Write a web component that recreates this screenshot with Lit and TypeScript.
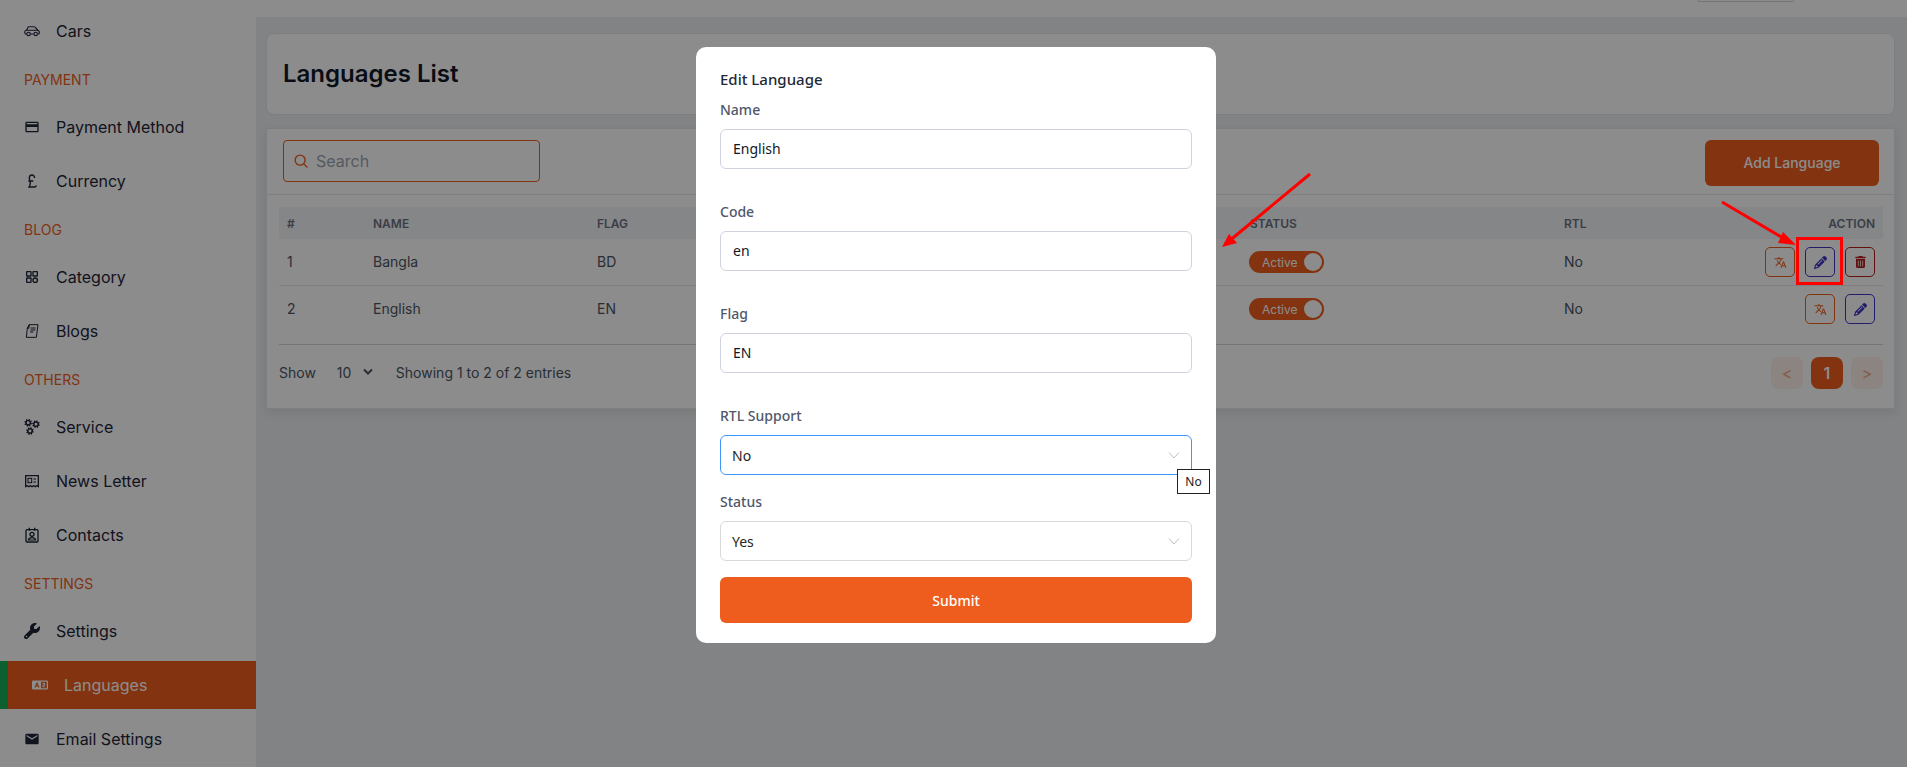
import { LitElement, css, html, svg } from "lit";
import { customElement } from "lit/decorators.js";

// one toothed gear as a path, the hole is cut by evenodd
const gear = (cx: number, cy: number, r: number) => {
  const teeth = 8;
  const pts: string[] = [];
  for (let i = 0; i < teeth * 4; i++) {
    const a = (i / (teeth * 4)) * Math.PI * 2 + 0.2;
    const rad = i % 4 < 2 ? r : r * 0.72;
    pts.push(`${(cx + Math.cos(a) * rad).toFixed(2)} ${(cy + Math.sin(a) * rad).toFixed(2)}`);
  }
  const h = r * 0.36;
  const hole = `M${cx - h} ${cy}a${h} ${h} 0 1 0 ${h * 2} 0a${h} ${h} 0 1 0 ${-h * 2} 0z`;
  return svg`<path fill="currentColor" fill-rule="evenodd" d=${"M" + pts.join("L") + "z" + hole}></path>`;
};

const icons: Record<string, unknown> = {
  car: svg`<svg class="ico" viewBox="0 -3 16 16" fill="none" stroke="currentColor" stroke-width="1.100" stroke-linejoin="round"><path d="M2.600 4.300 3.900 1.500Q4.200.700 5 .700H9.700Q10.500.700 11 1.200L13.700 4"/><path d="M2.800 8H1.700Q.800 8 .800 7.100V5.800Q.800 4.300 2.500 4.300H13Q15.300 4.500 15.300 6.300V7.200Q15.300 8 14.500 8H13.600M6.300 8H9.800"/><circle cx="4.500" cy="8" r="1.700"/><circle cx="11.700" cy="8" r="1.700"/></svg>`,
  card: svg`<svg class="ico" viewBox="0 0 24 24" fill="currentColor"><path d="M20 4H4c-1.110 0-1.990.890-1.990 2L2 18c0 1.110.890 2 2 2h16c1.110 0 2-.890 2-2V6c0-1.110-.890-2-2-2zm0 14H4v-6h16v6zm0-10H4V6h16v2z"/></svg>`,
  pound: svg`<svg class="ico" viewBox="0 0 24 24" fill="none" stroke="currentColor" stroke-width="2"><path d="M16 7.500C15.600 5 14 3 12 3 9.500 3 8 5 8 7.500c0 3 1.500 5 1.500 8 0 2.500-1 4-2 5.500h8c1.700 0 2.700-1 3-2.500M6.500 12H14"/></svg>`,
  grid: svg`<svg class="ico" viewBox="0 0 24 24" fill="none" stroke="currentColor" stroke-width="2"><rect x="4" y="4" width="6.500" height="6.500" rx=".5"/><rect x="13.500" y="4" width="6.500" height="6.500" rx=".5"/><rect x="4" y="13.500" width="6.500" height="6.500" rx=".5"/><circle cx="16.800" cy="16.800" r="3.300"/></svg>`,
  blog: svg`<svg class="ico" viewBox="0 0 24 24" fill="none" stroke="currentColor" stroke-width="1.500" stroke-linejoin="round"><path d="M8 2.500h13l-2.500 19H3.500L5 8z"/><path d="M8 2.500 5 8h2.300zM10 7.500h7.500M9.500 10.500h7.500M9 13.500h5"/></svg>`,
  gears: svg`<svg class="ico" viewBox="0 0 16 16">${gear(4.2, 3.8, 4)}${gear(12, 5.2, 4)}${gear(6, 12, 4)}</svg>`,
  news: svg`<svg class="ico" viewBox="0 0 24 24" fill="none" stroke="currentColor" stroke-width="2"><path d="M2.500 4h19v16.500l-2.400-1.400-2.300 1.400-2.400-1.400-2.400 1.400-2.400-1.400-2.300 1.400-2.400-1.400-2.400 1.400z"/><rect x="6" y="8" width="5.500" height="6.500" stroke-width="1.600"/><path d="M14 9h4M14 13.500h4" stroke-width="1.800"/></svg>`,
  contact: svg`<svg class="ico" viewBox="0 0 24 24" fill="none" stroke="currentColor" stroke-width="2"><rect x="3" y="4" width="18" height="18.500" rx="1.500"/><path d="M8 1v4.500M16 1v4.500"/><circle cx="12" cy="11" r="3"/><path d="M6.500 19.500c.7-2.500 3-3.500 5.500-3.500s4.800 1 5.500 3.500z" stroke-width="1.800"/></svg>`,
  wrench: svg`<svg class="ico" viewBox="0 0 512 512" fill="currentColor"><path d="M352 320c88.400 0 160-71.600 160-160c0-15.300-2.200-30.100-6.200-44.200c-3.100-10.800-16.400-13.200-24.300-5.300l-76.800 76.800c-3 3-7.100 4.700-11.300 4.700H336c-8.800 0-16-7.200-16-16V118.600c0-4.200 1.700-8.300 4.700-11.300l76.800-76.800c7.900-7.900 5.400-21.200-5.300-24.300C382.100 2.200 367.300 0 352 0C263.600 0 192 71.600 192 160c0 19.100 3.400 37.500 9.500 54.500L19.900 396.100C7.200 408.800 0 426.100 0 444.100C0 481.600 30.400 512 67.900 512c18 0 35.300-7.200 48-19.900L297.500 310.500c17 6.200 35.400 9.500 54.500 9.500zM80 408a24 24 0 1 1 0 48 24 24 0 1 1 0-48z"/></svg>`,
  lang: svg`<svg class="ico" viewBox="0 0 16 16"><path fill="currentColor" fill-rule="evenodd" d="M1.200 3.500H14.800Q16 3.500 16 4.700V11.300Q16 12.500 14.800 12.500H1.200Q0 12.500 0 11.300V4.700Q0 3.500 1.200 3.500zM4.500 5.500 2.500 10.500H3.800L4.100 9.600H5.900L6.200 10.500H7.500L5.500 5.500zM5 7 5.500 8.500H4.500zM9 4.800V11.200H14.700V4.800zM10.500 6H13V8.600H11.500V9.400H13V10.200H10.500V7.800H12V6.900H10.500z"/></svg>`,
  mail: svg`<svg class="ico" viewBox="0 0 24 24" fill="currentColor"><path d="M20 4H4c-1.100 0-1.990.900-1.990 2L2 18c0 1.100.900 2 2 2h16c1.100 0 2-.900 2-2V6c0-1.100-.900-2-2-2zm0 4l-8 5-8-5V6l8 5 8-5v2z"/></svg>`,
};

const translateIcon = svg`<svg class="act" viewBox="0 0 24 24" fill="currentColor"><path d="M12.870 15.070l-2.540-2.510.030-.030c1.740-1.940 2.980-4.170 3.710-6.530H17V4h-7V2H8v2H1v1.990h11.170C11.500 7.920 10.440 9.750 9 11.350 8.070 10.320 7.300 9.190 6.690 8h-2c.730 1.630 1.730 3.170 2.980 4.560l-5.090 5.020L4 19l5-5 3.110 3.110.760-2.040zM18.500 10h-2L12 22h2l1.120-3h4.750L21 22h2l-4.500-12zm-2.620 7l1.620-4.330L19.120 17h-3.240z"/></svg>`;
const pencilIcon = svg`<svg class="act" viewBox="0 0 512 512" fill="currentColor"><path d="M410.300 231l11.300-11.300-33.900-33.900-62.100-62.100L291.700 89.800l-11.300 11.300-22.600 22.600L58.600 322.900c-10.400 10.400-18 23.300-22.200 37.400L1 480.700c-2.500 8.400-.2 17.500 6.100 23.700s15.300 8.500 23.700 6.100l120.300-35.400c14.100-4.200 27-11.800 37.400-22.200L387.700 253.700 410.300 231zM160 399.400l-9.100 22.700c-4 3.100-8.500 5.400-13.300 6.900L59.400 452l23-78.100c1.400-4.900 3.800-9.400 6.900-13.300l22.700-9.100v32c0 8.800 7.200 16 16 16h32zM362.700 18.700L348.300 33.200 325.700 55.800 314.300 67.100l33.900 33.900 62.100 62.100 33.900 33.900 11.300-11.300 22.600-22.600 14.500-14.500c25-25 25-65.500 0-90.500L453.300 18.700c-25-25-65.500-25-90.500 0zm-47.400 168l-144 144c-6.200 6.200-16.400 6.200-22.600 0s-6.200-16.400 0-22.600l144-144c6.200-6.200 16.400-6.200 22.600 0s6.200 16.400 0 22.600z"/></svg>`;
const trashIcon = svg`<svg class="act" viewBox="0 0 448 512" fill="currentColor"><path d="M135.200 17.700C140.600 6.800 151.700 0 163.800 0H284.200c12.100 0 23.200 6.800 28.600 17.700L320 32h96c17.700 0 32 14.300 32 32s-14.300 32-32 32H32C14.300 96 0 81.700 0 64S14.300 32 32 32h96l7.200-14.300zM32 128H416V448c0 35.300-28.700 64-64 64H96c-35.300 0-64-28.700-64-64V128zm96 64c-8.800 0-16 7.200-16 16V432c0 8.800 7.200 16 16 16s16-7.200 16-16V208c0-8.800-7.200-16-16-16zm96 0c-8.800 0-16 7.200-16 16V432c0 8.800 7.200 16 16 16s16-7.200 16-16V208c0-8.800-7.200-16-16-16zm96 0c-8.800 0-16 7.200-16 16V432c0 8.800 7.200 16 16 16s16-7.200 16-16V208c0-8.800-7.200-16-16-16z"/></svg>`;

type NavItem = { label: string; icon?: string; active?: boolean; section?: boolean };

const nav: NavItem[] = [
  { label: "Cars", icon: "car" },
  { label: "PAYMENT", section: true },
  { label: "Payment Method", icon: "card" },
  { label: "Currency", icon: "pound" },
  { label: "BLOG", section: true },
  { label: "Category", icon: "grid" },
  { label: "Blogs", icon: "blog" },
  { label: "OTHERS", section: true },
  { label: "Service", icon: "gears" },
  { label: "News Letter", icon: "news" },
  { label: "Contacts", icon: "contact" },
  { label: "SETTINGS", section: true },
  { label: "Settings", icon: "wrench" },
  { label: "Languages", icon: "lang", active: true },
  { label: "Email Settings", icon: "mail" },
];

const rows = [
  { id: 1, name: "Bangla", flag: "BD", code: "bn", canDelete: true },
  { id: 2, name: "English", flag: "EN", code: "en", canDelete: false },
];

@customElement("app-root")
export class AppRoot extends LitElement {
  static styles = css`
    :host {
      display: block;
      height: 767px;
      overflow: hidden;
      position: relative;
      font-family: Inter, "Liberation Sans", sans-serif;
      color: #1f2937;
    }
    * { box-sizing: border-box; }
    .page { display: flex; height: 767px; background: #eceef0; }

    .sidebar {
      width: 256px;
      flex: none;
      background: #fff;
      padding-top: 7px;
      display: flex;
      flex-direction: column;
      gap: 6px;
    }
    .section {
      height: 36px;
      padding-left: 24px;
      display: flex;
      align-items: center;
      font-size: 14px;
      color: #ee5d1d;
    }
    .item {
      height: 48px;
      flex: none;
      padding-left: 24px;
      display: flex;
      align-items: center;
      gap: 16px;
      font-size: 16px;
      color: #1e2538;
    }
    .item.active {
      background: #ee5d1d;
      color: #fff;
      border-left: 8px solid #16ad55;
    }
    .ico { width: 16px; height: 16px; flex: none; }

    .main { flex: 1; min-width: 0; display: flex; flex-direction: column; }
    .topbar { height: 17px; background: #fff; display: flex; justify-content: flex-end; padding-right: 113px; flex: none; }
    .top-btn { width: 96px; height: 2px; border: 1px solid #d1d5db; border-top: 0; border-radius: 0 0 6px 6px; }
    .content { padding: 16px 12px 0 10px; display: flex; flex-direction: column; gap: 13px; }
    .title-card {
      height: 82px;
      background: #fff;
      border: 1px solid #e5e7eb;
      border-radius: 8px;
      padding-left: 16px;
      display: flex;
      align-items: center;
    }
    h1 { margin: 0 0 2px; font-size: 24px; font-weight: 600; color: #111827; }
    .list-card {
      height: 281px;
      background: #fff;
      border: 1px solid #e5e7eb;
      box-shadow: 0 4px 8px rgba(0, 0, 0, 0.08);
      border-radius: 2px;
    }
    .toolbar {
      height: 66px;
      padding: 11px 15px 0 16px;
      display: flex;
      justify-content: space-between;
      align-items: flex-start;
      border-bottom: 1px solid #e5e7eb;
    }
    .search {
      width: 257px;
      height: 42px;
      border: 1px solid #ee5d1d;
      border-radius: 4px;
      display: flex;
      align-items: center;
      gap: 8px;
      padding-left: 10px;
      font-size: 16px;
      color: #9ca3af;
    }
    .search svg { width: 14px; height: 14px; color: #ee5d1d; }
    .add {
      width: 174px;
      height: 46px;
      border: 0;
      border-radius: 6px;
      background: #ee5d1d;
      color: #fff;
      padding-bottom: 2px;
      font: 500 14px Inter, sans-serif;
    }
    .table-wrap { padding: 12px 11px 0 12px; }
    table { width: 1604px; border-collapse: collapse; table-layout: fixed; font-size: 14px; color: #4b5563; }
    col.c-id { width: 86px; }
    col.c-name { width: 224px; }
    col.c-flag { width: 327px; }
    col.c-code { width: 326px; }
    col.c-status { width: 314px; }
    col.c-rtl { width: 140px; }
    col.c-action { width: 187px; }
    th {
      height: 32px;
      padding: 0 8px;
      background: #f3f4f6;
      text-align: left;
      font-size: 12px;
      font-weight: 600;
      color: #6b7280;
      text-transform: uppercase;
    }
    th.right { text-align: right; }
    td { padding: 8px; height: 46px; }
    td .t { margin-bottom: 2px; }
    tr.sep td { border-bottom: 1px solid #e5e7eb; }
    .actions { display: flex; justify-content: flex-end; gap: 10px; }
    .act-btn {
      width: 30px;
      height: 30px;
      background: #fff;
      border: 1px solid currentColor;
      border-radius: 5px;
      padding: 0;
      display: flex;
      align-items: center;
      justify-content: center;
    }
    .act { width: 13px; height: 13px; }
    .red .act { width: 11px; height: 12px; }
    .orange { color: #ee5d1d; }
    .blue { color: #3f36c4; }
    .red { color: #b91c1c; }
    .toggle {
      width: 75px;
      height: 22px;
      margin-left: -1px;
      border-radius: 11px;
      background: #ee5d1d;
      color: #fff;
      display: flex;
      align-items: center;
      justify-content: space-between;
      padding: 0 2px 0 13px;
      font-size: 12px;
    }
    .knob { width: 18px; height: 18px; border-radius: 50%; background: #fff; }
    .foot {
      margin: 12px 11px 0 12px;
      border-top: 1px solid #d1d5db;
      padding-top: 12px;
      display: flex;
      align-items: center;
      justify-content: space-between;
      font-size: 14px;
      color: #4b5563;
    }
    .foot-left { display: flex; align-items: center; padding-bottom: 2px; }
    .size { margin-left: 21px; display: flex; align-items: center; gap: 12px; width: 59px; font-size: 14px; }
    .size svg { width: 10px; height: 8px; }
    .pager { display: flex; gap: 8px; }
    .pg {
      width: 32px;
      height: 32px;
      border-radius: 8px;
      display: flex;
      align-items: center;
      justify-content: center;
      background: #fdf0e9;
      color: #f3a783;
      font-size: 16px;
    }
    .pg.on { background: #ee5d1d; color: #fff; font-weight: 600; }

    .mask {
      position: absolute;
      inset: 0;
      background: rgba(0, 0, 0, 0.45);
    }
    .modal {
      position: absolute;
      left: 696px;
      top: 47px;
      width: 520px;
      height: 596px;
      background: #fff;
      border-radius: 10px;
      padding: 22px 24px 20px;
      font-family: "Noto Sans", "Open Sans", sans-serif;
      font-size: 14px;
    }
    .modal h2 { margin: 0 0 11px; font-size: 15px; line-height: 20px; font-weight: 500; color: #1f2937; }
    .field { margin-bottom: 33px; }
    .field.tight { margin-bottom: 17px; }
    .field.last { margin-bottom: 16px; }
    .field label { display: block; line-height: 20px; margin-bottom: 9px; color: #4f576b; font-weight: 500; font-size: 14px; }
    .field input {
      display: block;
      width: 100%;
      height: 40px;
      border: 1px solid #cfd3e0;
      border-radius: 6px;
      padding: 0 12px 2px;
      font: 14px "Noto Sans", sans-serif;
      color: #111827;
      outline: none;
    }
    .select {
      position: relative;
      height: 40px;
      border: 1px solid #d9d9d9;
      border-radius: 6px;
      padding: 0 11px;
      display: flex;
      align-items: center;
      justify-content: space-between;
      color: #262626;
    }
    .select.focus { border-color: #4096ff; }
    .select svg { width: 12px; height: 12px; color: #bfbfbf; }
    .tip {
      position: absolute;
      left: 456px;
      top: 33px;
      width: 33px;
      height: 25px;
      background: #fff;
      border: 1px solid #222;
      font-size: 12px;
      display: flex;
      align-items: center;
      justify-content: center;
      color: #222;
    }
    .submit {
      display: block;
      width: 100%;
      height: 46px;
      border: 0;
      border-radius: 6px;
      background: #ee5d1d;
      color: #fff;
      font: 500 14px "Noto Sans", sans-serif;
    }
    .notes { position: absolute; inset: 0; width: 1907px; height: 767px; pointer-events: none; }
  `;

  private chevron() {
    return svg`<svg viewBox="0 0 12 12" fill="none" stroke="currentColor" stroke-width="1"><path d="M1 3.500 6 9l5-5.500"/></svg>`;
  }

  private navItem(n: NavItem) {
    if (n.section) return html`<div class="section">${n.label}</div>`;
    return html`<div class="item ${n.active ? "active" : ""}">${icons[n.icon!]}<span>${n.label}</span></div>`;
  }

  private table() {
    return html`
      <table>
        <colgroup>
          <col class="c-id" /><col class="c-name" /><col class="c-flag" /><col class="c-code" />
          <col class="c-status" /><col class="c-rtl" /><col class="c-action" />
        </colgroup>
        <thead>
          <tr>
            <th>#</th><th>Name</th><th>Flag</th><th>Code</th><th>Status</th><th>RTL</th>
            <th class="right">Action</th>
          </tr>
        </thead>
        <tbody>
          ${rows.map(
            (r, i) => html`
              <tr class=${i === 0 ? "sep" : ""}>
                <td><div class="t">${r.id}</div></td>
                <td><div class="t">${r.name}</div></td>
                <td><div class="t">${r.flag}</div></td>
                <td><div class="t">${r.code}</div></td>
                <td><div class="toggle"><span>Active</span><span class="knob"></span></div></td>
                <td><div class="t">No</div></td>
                <td>
                  <div class="actions">
                    <button class="act-btn orange">${translateIcon}</button>
                    <button class="act-btn blue">${pencilIcon}</button>
                    ${r.canDelete ? html`<button class="act-btn red">${trashIcon}</button>` : ""}
                  </div>
                </td>
              </tr>
            `
          )}
        </tbody>
      </table>
    `;
  }

  render() {
    return html`
      <div class="page">
        <aside class="sidebar">${nav.map((n) => this.navItem(n))}</aside>
        <div class="main">
          <div class="topbar"><div class="top-btn"></div></div>
          <div class="content">
            <div class="title-card"><h1>Languages List</h1></div>
            <div class="list-card">
              <div class="toolbar">
                <div class="search">
                  <svg viewBox="0 0 24 24" fill="none" stroke="currentColor" stroke-width="2.400"><circle cx="10.500" cy="10.500" r="8.500"/><path d="m23 23-6.500-6.500"/></svg>
                  <span>Search</span>
                </div>
                <button class="add">Add Language</button>
              </div>
              <div class="table-wrap">${this.table()}</div>
              <div class="foot">
                <div class="foot-left">
                  <span>Show</span>
                  <span class="size"><span>10</span><svg viewBox="0 0 10 8" fill="none" stroke="currentColor" stroke-width="2"><path d="M1 1.500 5 5.500l4-4"/></svg></span>
                  <span>Showing 1 to 2 of 2 entries</span>
                </div>
                <div class="pager">
                  <span class="pg">&lt;</span><span class="pg on">1</span><span class="pg">&gt;</span>
                </div>
              </div>
            </div>
          </div>
        </div>
      </div>
      <div class="mask"></div>
      <div class="modal">
        <h2>Edit Language</h2>
        <div class="field"><label>Name</label><input value="English" /></div>
        <div class="field"><label>Code</label><input value="en" /></div>
        <div class="field"><label>Flag</label><input value="EN" /></div>
        <div class="field tight">
          <label>RTL Support</label>
          <div class="select focus"><span>No</span>${this.chevron()}<div class="tip">No</div></div>
        </div>
        <div class="field last">
          <label>Status</label>
          <div class="select"><span>Yes</span>${this.chevron()}</div>
        </div>
        <button class="submit">Submit</button>
      </div>
      <svg class="notes" viewBox="0 0 1907 767" fill="none" stroke="#ff0000" stroke-width="3">
        <path d="M1310 174 1228 242"/>
        <path d="M1222 247 1237 243 1229 234z" fill="#ff0000" stroke="none"/>
        <path d="M1722 202 1788 241"/>
        <path d="M1796 245 1783 232 1778 243z" fill="#ff0000" stroke="none"/>
        <rect x="1797.500" y="238.500" width="44" height="45"/>
      </svg>
    `;
  }
}
